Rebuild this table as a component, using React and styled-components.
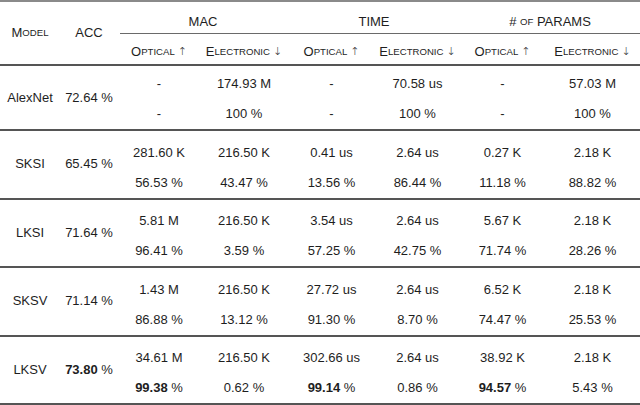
import React from "react";
import styled, { createGlobalStyle } from "styled-components";

const GlobalStyle = createGlobalStyle`
  body {
    margin: 0;
    background: #fff;
  }
`;

const rows = [
  {
    model: "AlexNet",
    acc: "72.64 %",
    top: ["-", "174.93 M", "-", "70.58 us", "-", "57.03 M"],
    bottom: ["-", "100 %", "-", "100 %", "-", "100 %"],
  },
  {
    model: "SKSI",
    acc: "65.45 %",
    top: ["281.60 K", "216.50 K", "0.41 us", "2.64 us", "0.27 K", "2.18 K"],
    bottom: ["56.53 %", "43.47 %", "13.56 %", "86.44 %", "11.18 %", "88.82 %"],
  },
  {
    model: "LKSI",
    acc: "71.64 %",
    top: ["5.81 M", "216.50 K", "3.54 us", "2.64 us", "5.67 K", "2.18 K"],
    bottom: ["96.41 %", "3.59 %", "57.25 %", "42.75 %", "71.74 %", "28.26 %"],
  },
  {
    model: "SKSV",
    acc: "71.14 %",
    top: ["1.43 M", "216.50 K", "27.72 us", "2.64 us", "6.52 K", "2.18 K"],
    bottom: ["86.88 %", "13.12 %", "91.30 %", "8.70 %", "74.47 %", "25.53 %"],
  },
  {
    model: "LKSV",
    acc: "*73.80 %",
    top: ["34.61 M", "216.50 K", "302.66 us", "2.64 us", "38.92 K", "2.18 K"],
    bottom: ["*99.38 %", "0.62 %", "*99.14 %", "0.86 %", "*94.57 %", "5.43 %"],
  },
];

const Table = styled.div`
  display: grid;
  width: 640px;
  grid-template-columns: 60px 58px 82px 88px 87px 85px 85px 95px;
  grid-template-rows:
    2px 31px 1px 30px 2px
    33px 30px 2px
    repeat(4, 36.5px 30px 2px);
  font-family: "Liberation Sans", Arial, sans-serif;
  font-size: 13px;
  color: #1e1e1e;
`;

const Rule = styled.div`
  grid-column: 1 / -1;
  background: ${(p) => (p.$light ? "#8a8a8a" : "#555")};
`;

const CmidRule = styled.div`
  grid-column: 3 / -1;
  margin-left: 2px;
  background: #6a6a6a;
`;

const Cell = styled.div`
  display: flex;
  justify-content: center;
  align-items: ${(p) => (p.$end ? "flex-end" : "center")};
  line-height: 30px;
  white-space: nowrap;
  grid-row: ${(p) => (p.$rows ? `span ${p.$rows}` : "auto")};
`;

const GroupHead = styled(Cell)`
  grid-column: span 2;
  padding-top: 8px;
  line-height: 23px;
`;

const SubHead = styled(Cell)`
  padding-top: 6px;
  line-height: 24px;
`;

const Small = styled.span`
  font-size: 9.6px;
`;

const Arrow = styled.span`
  margin-left: 3px;
  font-family: "DejaVu Sans", sans-serif;
  font-size: 11px;
  font-weight: 300;
`;

const Strong = styled.b`
  font-weight: 700;
`;

// small caps drawn by hand: first letter kept, the rest upper-cased smaller
const Caps = ({ children, all }) => {
  const s = String(children);
  if (all) return <Small>{s.toUpperCase()}</Small>;
  return (
    <>
      {s[0]}
      <Small>{s.slice(1).toUpperCase()}</Small>
    </>
  );
};

const Val = ({ text }) => {
  if (text.startsWith("*")) {
    const [num, unit] = text.slice(1).split(" ");
    return (
      <>
        <Strong>{num}</Strong>&nbsp;{unit}
      </>
    );
  }
  return text;
};

const Dir = ({ up }) => (
  <>
    <Caps>{up ? "Optical" : "Electronic"}</Caps>
    <Arrow>{up ? "↑" : "↓"}</Arrow>
  </>
);

const App = () => {
  return (
    <>
      <GlobalStyle />
      <Table>
        <Rule $light />
        <Cell $rows={3}>
          <Caps>Model</Caps>
        </Cell>
        <Cell $rows={3}>ACC</Cell>
        <GroupHead>MAC</GroupHead>
        <GroupHead>TIME</GroupHead>
        <GroupHead>
          #&nbsp;<Caps all>of</Caps>&nbsp;PARAMS
        </GroupHead>
        <CmidRule />
        {[0, 1, 2].map((i) => (
          <React.Fragment key={i}>
            <SubHead>
              <Dir up />
            </SubHead>
            <SubHead>
              <Dir />
            </SubHead>
          </React.Fragment>
        ))}
        <Rule />
        {rows.map((r) => (
          <React.Fragment key={r.model}>
            <Cell $rows={2}>{r.model}</Cell>
            <Cell $rows={2}>
              <Val text={r.acc} />
            </Cell>
            {r.top.map((v, i) => (
              <Cell $end key={"t" + i}>
                <Val text={v} />
              </Cell>
            ))}
            {r.bottom.map((v, i) => (
              <Cell key={"b" + i}>
                <Val text={v} />
              </Cell>
            ))}
            <Rule />
          </React.Fragment>
        ))}
      </Table>
    </>
  );
};

export default App;
